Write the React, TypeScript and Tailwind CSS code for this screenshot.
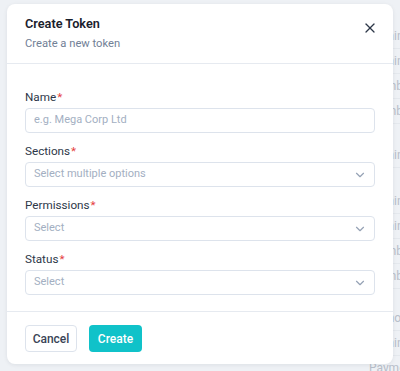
import { X, ChevronDown } from 'lucide-react';

// rows of the page behind the dialog (only their right edge shows)
const bgRows = [
  { gap: 24, text: 'Admin' },
  { gap: 0, text: 'Admin' },
  { gap: 0, text: 'Member' },
  { gap: 0, text: 'Member' },
  { gap: 19, text: 'Admin' },
  { gap: 21, text: 'Admin' },
  { gap: 0, text: 'Admin' },
  { gap: 0, text: 'Member' },
  { gap: 0, text: 'Member' },
  { gap: 17, text: 'Comodo' },
  { gap: 0, text: 'Admin' },
  { gap: 0, text: 'Payment' },
];

function Label({ children }: { children: string }) {
  return (
    <div className="h-[16px] leading-[16px] text-[11.7px] text-[#2d3748] mb-[3px]">
      {children}
      <span className="text-[#e53e3e] ml-[1px]">*</span>
    </div>
  );
}

function SelectBox({ placeholder }: { placeholder: string }) {
  return (
    <div className="h-[25px] flex items-center justify-between border border-[#dde3ec] rounded-[4px] pl-[8px] pr-[7px]">
      <span className="text-[11px] text-[#a3afc2]">{placeholder}</span>
      <ChevronDown className="w-[14px] h-[14px] text-[#96a2b5]" strokeWidth={2} />
    </div>
  );
}

export default function App() {
  return (
    <div
      className="relative w-[400px] h-[371px] overflow-hidden bg-[#eef1f5]"
      style={{ fontFamily: 'Roboto, "Noto Sans", sans-serif' }}
    >
      {/* page behind the dialog */}
      <div className="flex flex-col pl-[369px]">
        {bgRows.map((r, i) => (
          <div
            key={i}
            style={{ marginTop: r.gap }}
            className="h-[25px] flex items-center border-b border-[#e4e8ed] text-[12px] text-[#b8bfca] whitespace-nowrap"
          >
            {r.text}
          </div>
        ))}
      </div>

      {/* dialog */}
      <div className="absolute left-[7px] top-[4px] w-[386px] h-[360px] bg-white rounded-[8px] shadow-[0_1px_4px_rgba(15,23,42,0.08)] flex flex-col">
        <div className="h-[60px] border-b border-[#e6eaf0] px-[18px] pt-[11px] flex justify-between">
          <div>
            <div className="text-[12.7px] leading-[18px] font-semibold text-[#1a202c]">Create Token</div>
            <div className="text-[11.2px] leading-[18px] mt-[2px] text-[#718096]">Create a new token</div>
          </div>
          <button className="mt-[5px] mr-[-3px] h-[16px] text-[#2d3748]">
            <X className="w-[16px] h-[16px]" strokeWidth={1.9} />
          </button>
        </div>

        <div className="px-[18px] pt-[25px] pb-[16px] flex flex-col border-b border-[#e6eaf0]">
          <Label>Name</Label>
          <div className="h-[25px] flex items-center border border-[#dde3ec] rounded-[4px] pl-[8px]">
            <span className="text-[11px] text-[#a3afc2]">e.g. Mega Corp Ltd</span>
          </div>

          <div className="mt-[10px]">
            <Label>Sections</Label>
            <SelectBox placeholder="Select multiple options" />
          </div>

          <div className="mt-[10px]">
            <Label>Permissions</Label>
            <SelectBox placeholder="Select" />
          </div>

          <div className="mt-[10px]">
            <Label>Status</Label>
            <SelectBox placeholder="Select" />
          </div>
        </div>

        <div className="px-[18px] pt-[13px] flex gap-[12px]">
          <button className="h-[27px] w-[52px] border border-[#dde3ec] rounded-[4px] text-[12px] font-medium text-[#3a4456]">
            Cancel
          </button>
          <button className="h-[27px] w-[53px] bg-[#10c2c9] rounded-[4px] text-[12px] font-medium text-white">
            Create
          </button>
        </div>
      </div>
    </div>
  );
}
